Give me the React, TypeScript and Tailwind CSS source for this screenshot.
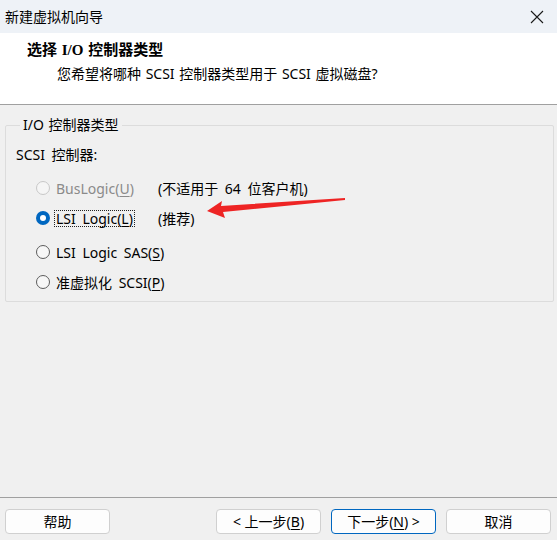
import React from 'react';

const Radio = ({ checked, disabled }: { checked?: boolean; disabled?: boolean }) => {
    if (checked) {
        return (
            <span className="w-[14px] h-[14px] rounded-full bg-[#0067c0] flex items-center justify-center shrink-0">
                <span className="w-[6px] h-[6px] rounded-full bg-white"></span>
            </span>
        );
    }
    return (
        <span
            className={
                disabled
                    ? 'w-[14px] h-[14px] rounded-full border border-[#c8c8c8] bg-[#f5f5f5] shrink-0'
                    : 'w-[14px] h-[14px] rounded-full border border-[#5c5c5c] bg-[#f7f7f7] shrink-0'
            }
        ></span>
    );
};

const Key = ({ k }: { k: string }) => <span className="underline underline-offset-2">{k}</span>;

const Button = ({ children, primary }: { children: React.ReactNode; primary?: boolean }) => (
    <button
        className={
            'w-[105px] h-[25px] rounded-[4px] bg-[#fdfdfd] flex items-center justify-center text-[14px] ' +
            (primary ? 'border border-[#0067c0]' : 'border border-[#d0d0d0]')
        }
    >
        {children}
    </button>
);

export default function App() {
    return (
        <div className="w-[557px] h-[540px] flex flex-col bg-[#f0f0f0] text-[14px] text-black font-['Noto_Sans','Noto_Sans_CJK_SC',sans-serif] relative overflow-hidden">
            {/* title bar */}
            <div className="h-[33px] bg-[#eef2f7] flex items-center justify-between pl-[5px] pr-[10px]">
                <span className="leading-[20px]">新建虚拟机向导</span>
                <svg width="14" height="14" viewBox="0 0 14 14" className="mr-[3px]">
                    <path d="M1 1 L13 13 M13 1 L1 13" stroke="#1a1a1a" strokeWidth="1.1" />
                </svg>
            </div>

            {/* header */}
            <div className="h-[72px] bg-white border-b border-[#a0a0a0] pt-[7px]">
                <div className="pl-[27px] leading-[20px] font-bold text-[15px] font-['Liberation_Serif','Noto_Sans_CJK_SC',serif] [word-spacing:1px]">选择 I/O 控制器类型</div>
                <div className="pl-[57px] mt-[4px] leading-[20px] [word-spacing:1px]">您希望将哪种 SCSI 控制器类型用于 SCSI 虚拟磁盘?</div>
            </div>

            {/* body */}
            <div className="flex-1 px-[5px] [word-spacing:3px]">
                <fieldset className="mt-[12px] w-[549px] border border-[#dcdcdc] rounded-[2px] pl-[10px] pb-[9px]">
                    <legend className="ml-[4px] px-[3px] leading-[16px] [word-spacing:1px]">I/O 控制器类型</legend>
                    <div className="mt-[12px] leading-[20px]">SCSI 控制器:</div>
                    <div className="flex flex-col">
                        <div className="mt-[13px] h-[20px] flex items-center">
                            <div className="w-[142px] flex items-center gap-[6px] pl-[20px] text-[#8a8a8a]">
                                <Radio disabled />
                                <span>BusLogic(<Key k="U" />)</span>
                            </div>
                            <span>(不适用于 64 位客户机)</span>
                        </div>
                        <div className="mt-[10px] h-[20px] flex items-center">
                            <div className="w-[142px] flex items-center gap-[4px] pl-[20px]">
                                <Radio checked />
                                <span className="border border-dotted border-[#222] leading-[15px] px-[1px]">
                                    LSI Logic(<Key k="L" />)
                                </span>
                            </div>
                            <span>(推荐)</span>
                        </div>
                        <div className="mt-[14px] h-[20px] flex items-center gap-[6px] pl-[20px]">
                            <Radio />
                            <span>LSI Logic SAS(<Key k="S" />)</span>
                        </div>
                        <div className="mt-[10px] h-[20px] flex items-center gap-[6px] pl-[20px]">
                            <Radio />
                            <span>准虚拟化 SCSI(<Key k="P" />)</span>
                        </div>
                    </div>
                </fieldset>
            </div>

            {/* footer */}
            <div className="h-[43px] border-t border-[#a0a0a0] flex items-start pt-[11px] pl-[5px] pr-[6px]">
                <Button>帮助</Button>
                <div className="flex-1"></div>
                <div className="flex gap-[10px] [word-spacing:2px]">
                    <Button>&lt; 上一步(<Key k="B" />)</Button>
                    <Button primary>下一步(<Key k="N" />) &gt;</Button>
                    <Button>取消</Button>
                </div>
            </div>

            {/* annotation arrow */}
            <svg className="absolute left-0 top-0 pointer-events-none" width="557" height="540">
                <polygon points="207,211 222,201 221,206 345,198 345,200 223,212 225,218" fill="#ee2424" />
            </svg>
        </div>
    );
}
